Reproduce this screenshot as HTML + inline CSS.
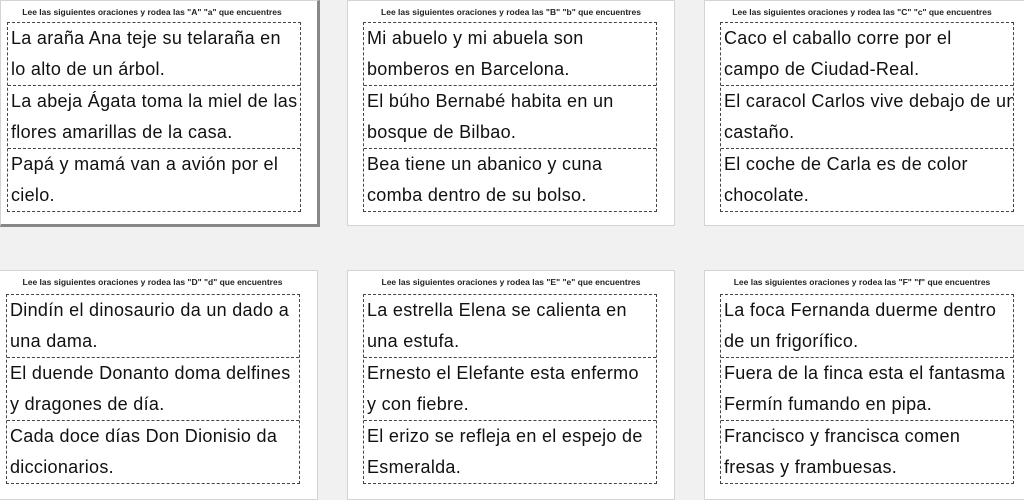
<!DOCTYPE html>
<html><head><meta charset="utf-8"><style>
body{margin:0;width:1024px;height:493px;background:#f1f1f1;position:relative;overflow:hidden;font-family:"Liberation Sans",sans-serif;}
.card{position:absolute;background:#fff;border:1px solid #d4d4d4;box-sizing:border-box;}
.h{position:absolute;left:0;right:0;text-align:center;font-size:8.5px;font-weight:bold;color:#222;white-space:nowrap;}
.box{position:absolute;width:294px;border:1px dashed #444;box-sizing:border-box;}
.row{height:63px;border-bottom:1px dashed #444;box-sizing:border-box;font-size:18px;letter-spacing:0.3px;line-height:31px;padding-left:3px;color:#111;white-space:nowrap;overflow:hidden;}
.row:last-child{border-bottom:none}
</style></head><body>

<div class="card" style="left:0;top:0;width:320px;height:227px;border-right:3px solid #888;border-bottom:3px solid #888;">
<div class="h" style="top:6px;left:-14px">Lee las siguientes oraciones y rodea las "A" "a" que encuentres</div>
<div class="box" style="left:6px;top:21px;height:190px">
<div class="row">La araña Ana teje su telaraña en<br>lo alto de un árbol.</div>
<div class="row">La abeja Ágata toma la miel de las<br>flores amarillas de la casa.</div>
<div class="row">Papá y mamá van a avión por el<br>cielo.</div>
</div></div>

<div class="card" style="left:347px;top:0;width:328px;height:226px;">
<div class="h" style="top:6px;">Lee las siguientes oraciones y rodea las "B" "b" que encuentres</div>
<div class="box" style="left:15px;top:21px;height:190px">
<div class="row">Mi abuelo y mi abuela son<br>bomberos en Barcelona.</div>
<div class="row">El búho Bernabé habita en un<br>bosque de Bilbao.</div>
<div class="row">Bea tiene un abanico y cuna<br>comba dentro de su bolso.</div>
</div></div>

<div class="card" style="left:704px;top:0;width:330px;height:226px;">
<div class="h" style="top:6px;left:-14px">Lee las siguientes oraciones y rodea las "C" "c" que encuentres</div>
<div class="box" style="left:15px;top:21px;height:190px">
<div class="row">Caco el caballo corre por el<br>campo de Ciudad-Real.</div>
<div class="row">El caracol Carlos vive debajo de un<br>castaño.</div>
<div class="row">El coche de Carla es de color<br>chocolate.</div>
</div></div>

<div class="card" style="left:-1px;top:270px;width:319px;height:230px;">
<div class="h" style="top:6px;left:-12px">Lee las siguientes oraciones y rodea las "D" "d" que encuentres</div>
<div class="box" style="left:6px;top:23px;height:190px">
<div class="row">Dindín el dinosaurio da un dado a<br>una dama.</div>
<div class="row">El duende Donanto doma delfines<br>y dragones de día.</div>
<div class="row">Cada doce días Don Dionisio da<br>diccionarios.</div>
</div></div>

<div class="card" style="left:347px;top:270px;width:328px;height:230px;">
<div class="h" style="top:6px;">Lee las siguientes oraciones y rodea las "E" "e" que encuentres</div>
<div class="box" style="left:15px;top:23px;height:190px">
<div class="row">La estrella Elena se calienta en<br>una estufa.</div>
<div class="row">Ernesto el Elefante esta enfermo<br>y con fiebre.</div>
<div class="row">El erizo se refleja en el espejo de<br>Esmeralda.</div>
</div></div>

<div class="card" style="left:704px;top:270px;width:330px;height:230px;">
<div class="h" style="top:6px;left:-14px">Lee las siguientes oraciones y rodea las "F" "f" que encuentres</div>
<div class="box" style="left:15px;top:23px;height:190px">
<div class="row">La foca Fernanda duerme dentro<br>de un frigorífico.</div>
<div class="row">Fuera de la finca esta el fantasma<br>Fermín fumando en pipa.</div>
<div class="row">Francisco y francisca comen<br>fresas y frambuesas.</div>
</div></div>

</body></html>
